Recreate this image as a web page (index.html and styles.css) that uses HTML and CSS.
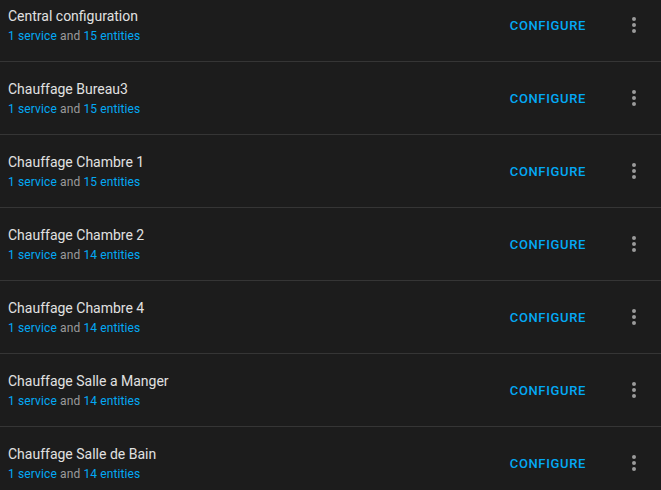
FILE: index.html
```html
<!DOCTYPE html>
<html>
<head>
<meta charset="utf-8">
<link rel="stylesheet" href="styles.css">
</head>
<body>
<div class="list">
  <div class="row">
    <div class="info"><div class="title">Central configuration</div><div class="sub"><span class="link">1 service</span> and <span class="link">15 entities</span></div></div>
    <div class="btn">CONFIGURE</div>
    <div class="menu"><svg viewBox="0 0 24 24" width="24" height="24"><path fill="currentColor" d="M12,16A2,2 0 0,1 14,18A2,2 0 0,1 12,20A2,2 0 0,1 10,18A2,2 0 0,1 12,16M12,10A2,2 0 0,1 14,12A2,2 0 0,1 12,14A2,2 0 0,1 10,12A2,2 0 0,1 12,10M12,4A2,2 0 0,1 14,6A2,2 0 0,1 12,8A2,2 0 0,1 10,6A2,2 0 0,1 12,4Z"/></svg></div>
  </div>
  <div class="row">
    <div class="info"><div class="title">Chauffage Bureau3</div><div class="sub"><span class="link">1 service</span> and <span class="link">15 entities</span></div></div>
    <div class="btn">CONFIGURE</div>
    <div class="menu"><svg viewBox="0 0 24 24" width="24" height="24"><path fill="currentColor" d="M12,16A2,2 0 0,1 14,18A2,2 0 0,1 12,20A2,2 0 0,1 10,18A2,2 0 0,1 12,16M12,10A2,2 0 0,1 14,12A2,2 0 0,1 12,14A2,2 0 0,1 10,12A2,2 0 0,1 12,10M12,4A2,2 0 0,1 14,6A2,2 0 0,1 12,8A2,2 0 0,1 10,6A2,2 0 0,1 12,4Z"/></svg></div>
  </div>
  <div class="row">
    <div class="info"><div class="title">Chauffage Chambre 1</div><div class="sub"><span class="link">1 service</span> and <span class="link">15 entities</span></div></div>
    <div class="btn">CONFIGURE</div>
    <div class="menu"><svg viewBox="0 0 24 24" width="24" height="24"><path fill="currentColor" d="M12,16A2,2 0 0,1 14,18A2,2 0 0,1 12,20A2,2 0 0,1 10,18A2,2 0 0,1 12,16M12,10A2,2 0 0,1 14,12A2,2 0 0,1 12,14A2,2 0 0,1 10,12A2,2 0 0,1 12,10M12,4A2,2 0 0,1 14,6A2,2 0 0,1 12,8A2,2 0 0,1 10,6A2,2 0 0,1 12,4Z"/></svg></div>
  </div>
  <div class="row">
    <div class="info"><div class="title">Chauffage Chambre 2</div><div class="sub"><span class="link">1 service</span> and <span class="link">14 entities</span></div></div>
    <div class="btn">CONFIGURE</div>
    <div class="menu"><svg viewBox="0 0 24 24" width="24" height="24"><path fill="currentColor" d="M12,16A2,2 0 0,1 14,18A2,2 0 0,1 12,20A2,2 0 0,1 10,18A2,2 0 0,1 12,16M12,10A2,2 0 0,1 14,12A2,2 0 0,1 12,14A2,2 0 0,1 10,12A2,2 0 0,1 12,10M12,4A2,2 0 0,1 14,6A2,2 0 0,1 12,8A2,2 0 0,1 10,6A2,2 0 0,1 12,4Z"/></svg></div>
  </div>
  <div class="row">
    <div class="info"><div class="title">Chauffage Chambre 4</div><div class="sub"><span class="link">1 service</span> and <span class="link">14 entities</span></div></div>
    <div class="btn">CONFIGURE</div>
    <div class="menu"><svg viewBox="0 0 24 24" width="24" height="24"><path fill="currentColor" d="M12,16A2,2 0 0,1 14,18A2,2 0 0,1 12,20A2,2 0 0,1 10,18A2,2 0 0,1 12,16M12,10A2,2 0 0,1 14,12A2,2 0 0,1 12,14A2,2 0 0,1 10,12A2,2 0 0,1 12,10M12,4A2,2 0 0,1 14,6A2,2 0 0,1 12,8A2,2 0 0,1 10,6A2,2 0 0,1 12,4Z"/></svg></div>
  </div>
  <div class="row">
    <div class="info"><div class="title">Chauffage Salle a Manger</div><div class="sub"><span class="link">1 service</span> and <span class="link">14 entities</span></div></div>
    <div class="btn">CONFIGURE</div>
    <div class="menu"><svg viewBox="0 0 24 24" width="24" height="24"><path fill="currentColor" d="M12,16A2,2 0 0,1 14,18A2,2 0 0,1 12,20A2,2 0 0,1 10,18A2,2 0 0,1 12,16M12,10A2,2 0 0,1 14,12A2,2 0 0,1 12,14A2,2 0 0,1 10,12A2,2 0 0,1 12,10M12,4A2,2 0 0,1 14,6A2,2 0 0,1 12,8A2,2 0 0,1 10,6A2,2 0 0,1 12,4Z"/></svg></div>
  </div>
  <div class="row">
    <div class="info"><div class="title">Chauffage Salle de Bain</div><div class="sub"><span class="link">1 service</span> and <span class="link">14 entities</span></div></div>
    <div class="btn">CONFIGURE</div>
    <div class="menu"><svg viewBox="0 0 24 24" width="24" height="24"><path fill="currentColor" d="M12,16A2,2 0 0,1 14,18A2,2 0 0,1 12,20A2,2 0 0,1 10,18A2,2 0 0,1 12,16M12,10A2,2 0 0,1 14,12A2,2 0 0,1 12,14A2,2 0 0,1 10,12A2,2 0 0,1 12,10M12,4A2,2 0 0,1 14,6A2,2 0 0,1 12,8A2,2 0 0,1 10,6A2,2 0 0,1 12,4Z"/></svg></div>
  </div>
</div>
</body>
</html>
```
FILE: styles.css
```css
html, body {
  margin: 0;
  padding: 0;
  background: #1c1c1c;
  overflow: hidden;
}
body {
  font-family: Roboto, "Noto Sans", sans-serif;
  -webkit-font-smoothing: antialiased;
}
.list {
  margin-top: -11px;
}
.row {
  display: flex;
  align-items: center;
  height: 72px;
  border-bottom: 1px solid #353535;
  padding: 0 3px 0 8px;
}
.info {
  flex: 1;
  min-width: 0;
}
.title {
  font-size: 14px;
  line-height: 20px;
  color: #e1e1e1;
}
.sub {
  font-size: 12px;
  line-height: 18px;
  margin-top: 1px;
  letter-spacing: 0.12px;
  color: #9b9b9b;
}
.link {
  color: #03a9f4;
}
.btn {
  color: #03a9f4;
  font-size: 13px;
  font-weight: 500;
  letter-spacing: 0.65px;
  padding: 2px 8px 0;
  line-height: 36px;
  margin-right: 16px;
}
.menu {
  width: 48px;
  height: 48px;
  display: flex;
  align-items: center;
  justify-content: center;
  color: #9b9b9b;
}
```
